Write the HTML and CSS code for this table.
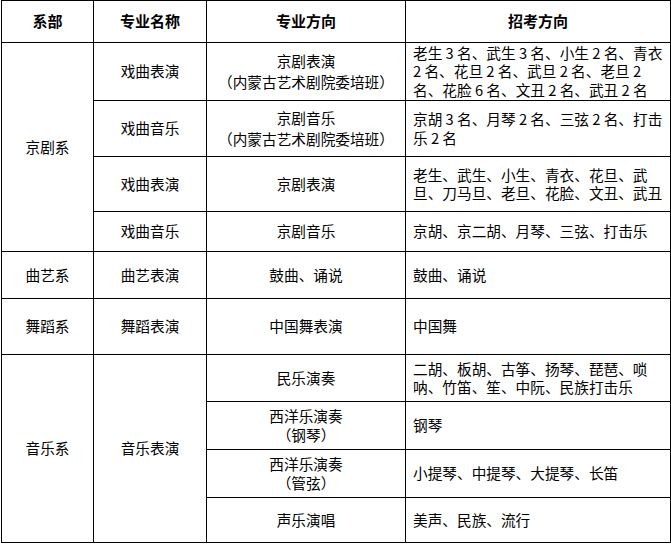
FILE: index.html
```html
<!DOCTYPE html>
<html lang="zh-CN">
<head>
<meta charset="utf-8">
<title>招考方向</title>
<link rel="stylesheet" href="styles.css">
</head>
<body>
<table class="plan">
  <colgroup>
    <col class="c1"><col class="c2"><col class="c3"><col class="c4">
  </colgroup>
  <thead>
    <tr class="h0">
      <th>系部</th><th>专业名称</th><th>专业方向</th><th>招考方向</th>
    </tr>
  </thead>
  <tbody>
    <tr class="h1">
      <td rowspan="4">京剧系</td>
      <td>戏曲表演</td>
      <td class="wide">京剧表演<br>（内蒙古艺术剧院委培班）</td>
      <td class="dir">老生 3 名、武生 3 名、小生 2 名、青衣<br>2 名、花旦 2 名、武旦 2 名、老旦 2<br>名、花脸 6 名、文丑 2 名、武丑 2 名</td>
    </tr>
    <tr class="h2">
      <td>戏曲音乐</td>
      <td class="wide">京剧音乐<br>（内蒙古艺术剧院委培班）</td>
      <td class="dir">京胡 3 名、月琴 2 名、三弦 2 名、打击<br>乐 2 名</td>
    </tr>
    <tr class="h3">
      <td>戏曲表演</td>
      <td>京剧表演</td>
      <td class="dir">老生、武生、小生、青衣、花旦、武<br>旦、刀马旦、老旦、花脸、文丑、武丑</td>
    </tr>
    <tr class="h4">
      <td>戏曲音乐</td>
      <td>京剧音乐</td>
      <td class="dir">京胡、京二胡、月琴、三弦、打击乐</td>
    </tr>
    <tr class="h5">
      <td>曲艺系</td>
      <td>曲艺表演</td>
      <td>鼓曲、诵说</td>
      <td class="dir">鼓曲、诵说</td>
    </tr>
    <tr class="h6">
      <td>舞蹈系</td>
      <td>舞蹈表演</td>
      <td>中国舞表演</td>
      <td class="dir">中国舞</td>
    </tr>
    <tr class="h7">
      <td rowspan="4">音乐系</td>
      <td rowspan="4">音乐表演</td>
      <td>民乐演奏</td>
      <td class="dir">二胡、板胡、古筝、扬琴、琵琶、唢<br>呐、竹笛、笙、中阮、民族打击乐</td>
    </tr>
    <tr class="h8">
      <td>西洋乐演奏<br>（钢琴）</td>
      <td class="dir">钢琴</td>
    </tr>
    <tr class="h9">
      <td>西洋乐演奏<br>（管弦）</td>
      <td class="dir">小提琴、中提琴、大提琴、长笛</td>
    </tr>
    <tr class="h10">
      <td>声乐演唱</td>
      <td class="dir">美声、民族、流行</td>
    </tr>
  </tbody>
</table>
</body>
</html>
```
FILE: styles.css
```css
html, body {
  margin: 0;
  padding: 0;
  background: #ffffff;
}

body {
  padding: 0 0 0 1px;
  font-family: "Noto Sans CJK SC", "Noto Sans", sans-serif;
  color: #000000;
  font-size: 14.67px;
}

.plan {
  border-collapse: collapse;
  table-layout: fixed;
  width: 669px;
}

.c1 { width: 92px; }
.c2 { width: 113px; }
.c3 { width: 199px; }
.c4 { width: 265px; }

.plan th,
.plan td {
  border: 1px solid #000000;
  padding: 0 4px;
  text-align: center;
  vertical-align: middle;
  line-height: 18.5px;
  box-sizing: border-box;
  font-weight: normal;
}

.plan th {
  font-weight: bold;
  font-size: 15px;
}

.plan td.wide {
  line-height: 20.7px;
}

.plan td.dir {
  text-align: left;
  padding: 0 0 0 7px;
  white-space: nowrap;
}

.h0 { height: 42px; }
.h1 { height: 58px; }
.h2 { height: 56px; }
.h3 { height: 55px; }
.h4 { height: 40px; }
.h5 { height: 47px; }
.h6 { height: 56px; }
.h7 { height: 47px; }
.h8 { height: 48px; }
.h9 { height: 48px; }
.h10 { height: 45px; }
```
